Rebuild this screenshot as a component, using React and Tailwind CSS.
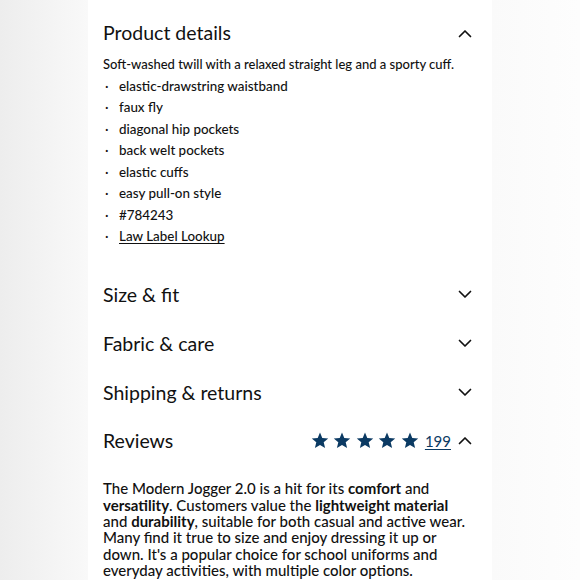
import React from "react";

const Chevron = ({ up }) => (
  <svg width="14" height="9" viewBox="0 0 14 9" fill="none" className="shrink-0">
    <path
      d={up ? "M1.5 7.5L7 2L12.5 7.5" : "M1.5 1.5L7 7L12.5 1.5"}
      stroke="#111"
      strokeWidth="1.7"
      strokeLinecap="round"
      strokeLinejoin="round"
    />
  </svg>
);

const Star = () => (
  <svg width="18" height="17" viewBox="0 0 24 23" className="shrink-0">
    <path
      d="M12 0.8l3.1 7.4 8 .6-6.1 5.2 1.9 7.8L12 17.6l-6.9 4.2 1.9-7.8L.9 8.8l8-.6z"
      fill="#0b3a63"
    />
  </svg>
);

const bullets = [
  "elastic-drawstring waistband",
  "faux fly",
  "diagonal hip pockets",
  "back welt pockets",
  "elastic cuffs",
  "easy pull-on style",
  "#784243",
];

const Section = ({ title }) => (
  <div className="flex h-[48.7px] items-center justify-between">
    <h3 className="text-[19.5px] text-[#111]">{title}</h3>
    <Chevron />
  </div>
);

export default function App() {
  return (
    <div
      className="flex h-[580px] w-[580px] overflow-hidden bg-[#fbfbfb]"
      style={{ fontFamily: "Lato, 'Open Sans', sans-serif" }}
    >
      {/* blurred backdrop left */}
      <div className="w-[88px] shrink-0 bg-gradient-to-r from-[#ededed] to-[#f9f9f9]" />

      {/* Panel */}
      <div className="w-[404px] shrink-0 bg-white pl-[15px] pr-[20px] pt-[19px] text-[#111]">
        <div className="flex h-[28px] items-center justify-between">
          <h2 className="text-[19.5px]">Product details</h2>
          <Chevron up />
        </div>

        <p className="mt-[7px] text-[13px] font-medium leading-[21.5px]">
          Soft-washed twill with a relaxed straight leg and a sporty cuff.
        </p>
        <ul className="text-[13.4px] font-medium leading-[21.5px]">
          {bullets.map((b) => (
            <li key={b} className="flex">
              <span className="w-[16px] pl-[2px]">·</span>
              <span>{b}</span>
            </li>
          ))}
          <li className="flex">
            <span className="w-[16px] pl-[2px]">·</span>
            <span className="underline underline-offset-2">Law Label Lookup</span>
          </li>
        </ul>

        <div className="mt-[23px]">
          <Section title="Size & fit" />
          <Section title="Fabric & care" />
          <Section title="Shipping & returns" />
          <div className="flex h-[48.7px] items-center justify-between">
            <h3 className="text-[19.5px]">Reviews</h3>
            <div className="flex items-center">
              <div className="flex items-center gap-[4.5px]">
                <Star />
                <Star />
                <Star />
                <Star />
                <Star />
              </div>
              <span className="ml-[6px] mr-[7px] text-[15px] text-[#0b3a63] underline underline-offset-2">
                199
              </span>
              <Chevron up />
            </div>
          </div>
        </div>

        <p className="mt-[15px] text-[15px] font-medium leading-[16.4px]">
          The Modern Jogger 2.0 is a hit for its <b>comfort</b> and{" "}
          <b>versatility</b>. Customers value the <b>lightweight material</b> and{" "}
          <b>durability</b>, suitable for both casual and active wear. Many find it
          true to size and enjoy dressing it up or down. It's a popular choice for
          school uniforms and everyday activities, with multiple color options.
        </p>
      </div>

      <div className="flex-1 bg-gradient-to-r from-[#fafafa] to-[#fdfdfd]" />
    </div>
  );
}
